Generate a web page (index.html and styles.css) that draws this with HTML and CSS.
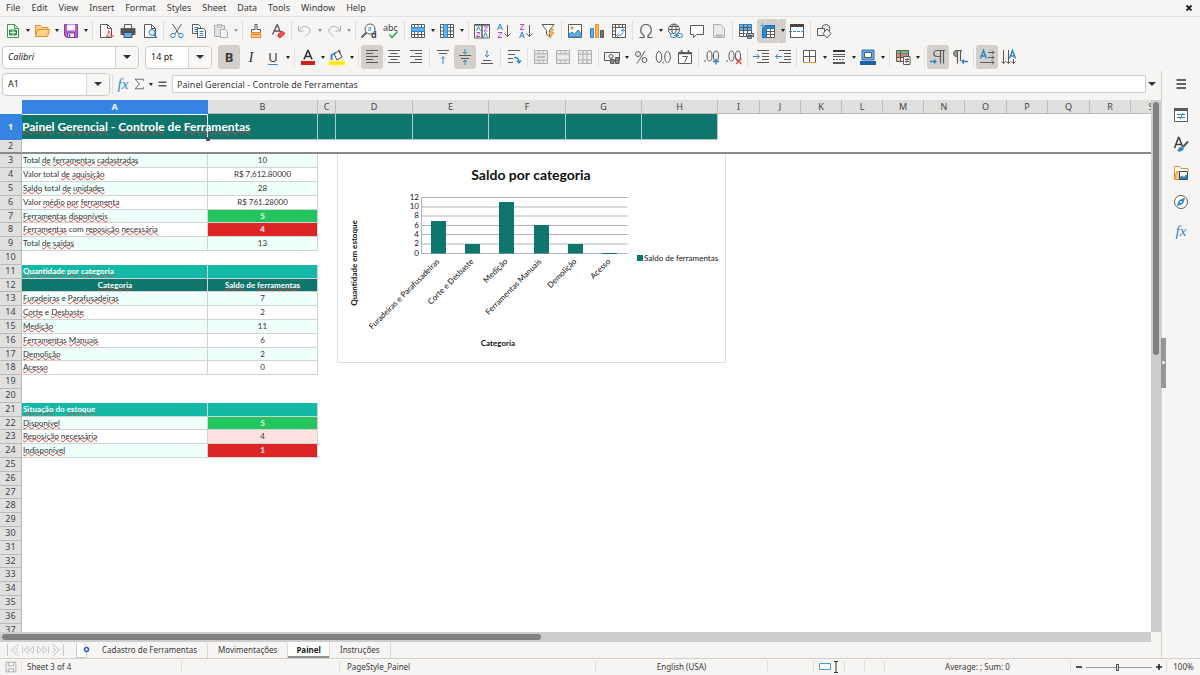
FILE: index.html
```html
<!DOCTYPE html>
<html lang="pt-BR">
<head>
<meta charset="utf-8">
<title>Painel Gerencial</title>
<link rel="stylesheet" href="styles.css">
</head>
<body>
<nav class="menubar">
  <button>File</button><button>Edit</button><button>View</button><button>Insert</button><button>Format</button><button>Styles</button><button>Sheet</button><button>Data</button><button>Tools</button><button>Window</button><button>Help</button>
  <button class="close" aria-label="Close"><svg viewBox="0 0 8 8"><path d="M1.5 1.5l5 5M6.500 1.500l-5 5" stroke="#222" stroke-width="1.800"/></svg></button>
</nav>

<div class="toolbar" role="toolbar" aria-label="Standard">
  <button class="tb" aria-label="New"><svg viewBox="0 0 16 16"><path d="M2.500 1.500h7l4 4v9h-11z" fill="#fff" stroke="#3a9a52"/><path d="M9.500 1.500v4h4" stroke="#3a9a52"/><path d="M4.500 7h7v5h-7z" fill="#43a85c" stroke="#2f8f49"/><path d="M5 9.500h6M8 7v5" stroke="#d8f0dc"/></svg></button><button class="dd" aria-label="New options"></button>
  <button class="tb" aria-label="Open"><svg viewBox="0 0 16 16"><path d="M1.500 13.500v-11h5l1.500 2h6v2" fill="#fbd38c" stroke="#e0912f"/><path d="M1.500 13.500l2-7h12l-2 7z" fill="#fbd38c" stroke="#e0912f"/></svg></button><button class="dd" aria-label="Open options"></button>
  <button class="tb" aria-label="Save"><svg viewBox="0 0 16 16"><path d="M1.500 1.500h13v13h-11l-2-2z" fill="#b565c8" stroke="#8e3fa6"/><path d="M4 1.500h8v6h-8z" fill="#f7f2f8" stroke="none"/><path d="M4.500 10h7v4.500h-7z" fill="#f7f2f8" stroke="#8e3fa6"/><path d="M6.500 11v3" stroke="#8e3fa6" stroke-width="1.500"/></svg></button><button class="dd" aria-label="Save options"></button>
  <i class="sep"></i>
  <button class="tb" aria-label="Export as PDF"><svg viewBox="0 0 16 16"><path d="M2.500 1.500h7l4 4v9h-11z" fill="#fff"/><path d="M9.500 1.500v4h4"/><path d="M7.500 14.500c2-2 3-4 3-7 1 3 2.500 5 5 5.500-3-.5-5 0-8 1.500z" stroke="#e3455a"/></svg></button>
  <button class="tb" aria-label="Print"><svg viewBox="0 0 16 16"><path d="M4.500 5v-3.500h7v3.500" fill="#fff"/><path d="M1 5.500h14v6h-14z" fill="#555"/><path d="M4 9.500h8v5h-8z" fill="#63aee6" stroke="#446"/></svg></button>
  <button class="tb" aria-label="Print preview"><svg viewBox="0 0 16 16"><path d="M2.500 1.500h7l4 4v9h-11z" fill="#fff"/><path d="M9.500 1.500v4h4"/><circle cx="10" cy="9.500" r="3" fill="#d9ecfa" stroke="#2f86cc"/><path d="M12 12l3 3" stroke="#2f86cc" stroke-width="1.300"/></svg></button>
  <i class="sep"></i>
  <button class="tb" aria-label="Cut"><svg viewBox="0 0 16 16"><path d="M3.500 1l6.500 10M12.500 1l-6.500 10"/><circle cx="4" cy="12.500" r="2.200" stroke="#2f86cc"/><circle cx="12" cy="12.500" r="2.200" stroke="#2f86cc"/></svg></button>
  <button class="tb" aria-label="Copy"><svg viewBox="0 0 16 16"><path d="M1.500 1.500h6l2 2v7h-8z" fill="#fff"/><path d="M3.500 4.500h4M3.500 6.500h4M3.500 8.500h4" stroke="#2f86cc"/><path d="M6.500 5.500h6l2 2v7h-8z" fill="#fff"/><path d="M8.500 8.500h4M8.500 10.500h4M8.500 12.500h4" stroke="#2f86cc"/></svg></button>
  <button class="tb off" aria-label="Paste" disabled><svg viewBox="0 0 16 16"><path d="M1.500 2.500h10v11h-10z" fill="#ccc"/><path d="M4.500 1.500h4v2.500h-4z" fill="#ddd"/><path d="M7.500 6.500h5l2 2v6h-7z" fill="#f4f4f4"/></svg></button><button class="dd off" aria-label="Paste options" disabled></button>
  <i class="sep"></i>
  <button class="tb" aria-label="Clone formatting"><svg viewBox="0 0 16 16"><path d="M7 1.500h2v5h3.500v3h-9v-3h3.500z" fill="#f6f6f6"/><path d="M3.500 9.500h9v2h-9z" fill="#f4b860" stroke="#dc8a2b"/><path d="M3 14.500h10l-.5-3h-9z" fill="#f9cf8f" stroke="#dc8a2b"/></svg></button>
  <button class="tb" aria-label="Clear formatting"><svg viewBox="0 0 16 16"><path d="M2.500 11.500l4.500-9.500h.5l3 7.500M4.500 8h5" stroke-width="1.400"/><path d="M7.500 12l4.500-4 3 2.500-4.500 4h-1.500z" fill="#ee4b55" stroke="#c9303c"/></svg></button>
  <i class="sep"></i>
  <button class="tb off" aria-label="Undo" disabled><svg viewBox="0 0 16 16"><path d="M1.500 3v5h5M2 7.500c2.500-6 11-4.500 11 0 0 2-1 3-5 6"/></svg></button><button class="dd off" aria-label="Undo list" disabled></button>
  <button class="tb off" aria-label="Redo" disabled><svg viewBox="0 0 16 16"><path d="M14.500 3v5h-5M14 7.500c-2.500-6-11-4.500-11 0 0 2 1 3 5 6"/></svg></button><button class="dd off" aria-label="Redo list" disabled></button>
  <i class="sep"></i>
  <button class="tb" aria-label="Find and replace"><svg viewBox="0 0 16 16"><circle cx="9" cy="6" r="5" fill="#fff"/><path d="M5.500 9.500l-5 5" stroke-width="1.800"/><text x="6.500" y="8" font-size="7" fill="#2f86cc">a</text><text x="10" y="15" font-size="9" font-weight="700" fill="#444">d</text></svg></button>
  <button class="tb" aria-label="Spelling"><svg viewBox="0 0 16 16"><text x="0" y="8" font-size="9" fill="#444">abc</text><path d="M6.500 11.500l2.500 3 5.500-6" stroke="#3aa55b" stroke-width="1.500"/></svg></button>
  <i class="sep"></i>
  <button class="tb" aria-label="Row"><svg viewBox="0 0 16 16"><path d="M1.500 1.500h13v13h-13z" fill="#fff"/><path d="M4.500 1.500v13M8 1.500v13M11.500 1.500v13M1.500 11.500h13"/><path d="M1.500 4.500h13v4h-13z" fill="#63aee6" stroke="#2f86cc"/></svg></button><button class="dd" aria-label="Row options"></button>
  <button class="tb" aria-label="Column"><svg viewBox="0 0 16 16"><path d="M1.500 1.500h13v13h-13z" fill="#fff"/><path d="M1.500 4.500h13M1.500 8h13M1.500 11.500h13M11.500 1.500v13"/><path d="M4.500 1.500h4v13h-4z" fill="#63aee6" stroke="#2f86cc"/></svg></button><button class="dd" aria-label="Column options"></button>
  <i class="sep"></i>
  <button class="tb" aria-label="Sort"><svg viewBox="0 0 16 16"><path d="M.5 1.500h15v13.500h-15z" fill="#fff"/><path d="M.5 2h15M8 2v13" stroke-width="1.500"/><path d="M2.500 8l2-4.500 2 4.500M9.500 14l2-4.500 2 4.500" stroke="#2f86cc"/><path d="M2.500 9.500h3.500l-3.500 4h3.500M10 4h3.500l-3.500 4h3.500" stroke="#b04fc4"/></svg></button>
  <button class="tb" aria-label="Sort ascending"><svg viewBox="0 0 16 16"><path d="M1.500 7l2.500-6 2.500 6M2.500 5h3" stroke="#2f86cc"/><path d="M2 9.500h4l-4 5h4" stroke="#b04fc4"/><path d="M11.500 2v11.500M8.500 10.500l3 3 3-3"/></svg></button>
  <button class="tb" aria-label="Sort descending"><svg viewBox="0 0 16 16"><path d="M2 1.500h4l-4 5h4" stroke="#b04fc4"/><path d="M1.500 15l2.500-6 2.500 6M2.500 13h3" stroke="#2f86cc"/><path d="M11.500 2v11.500M8.500 10.500l3 3 3-3"/></svg></button>
  <button class="tb" aria-label="AutoFilter"><svg viewBox="0 0 16 16"><path d="M2 1.500h12l-4.500 6v6l-3-2v-4z" fill="#fff"/><path d="M12 6l-3.500 5h2.500l-1 4.500 4-6h-2.500l2-3.500z" fill="#fbb655" stroke="#e0912f" stroke-width=".7"/></svg></button>
  <i class="sep"></i>
  <button class="tb" aria-label="Insert image"><svg viewBox="0 0 16 16"><path d="M1.500 1.500h13v13h-13z" fill="#fff"/><path d="M2 14v-3l3-2 2.500 2 3.500-4 3 3.500v3.500z" fill="#63aee6" stroke="#2f86cc"/><circle cx="5" cy="5" r="1.200" fill="#f4b860" stroke="#e0912f"/></svg></button>
  <button class="tb" aria-label="Insert chart"><svg viewBox="0 0 16 16"><path d="M1.500 5.500h3v9h-3z" fill="#63aee6" stroke="#2f86cc"/><path d="M6.500 1.500h3v13h-3z" fill="#fbb655" stroke="#e0912f"/><path d="M11.500 7.500h3v7h-3z" fill="#777"/></svg></button>
  <button class="tb" aria-label="Insert pivot table"><svg viewBox="0 0 16 16"><path d="M1.500 1.500h13v13h-13z" fill="#fff"/><path d="M1.500 4.500h13M4.500 1.500v13M8 1.500v3M11.500 1.500v3M1.500 8h3M1.500 11.500h3"/><path d="M7 12.500c4 0 5-2 5-5.500M5.500 12.500l2-2M5.500 12.500l2 2M12 6l-2 2M12 6l2 2" stroke="#2f86cc"/></svg></button>
  <i class="sep"></i>
  <button class="tb" aria-label="Special character"><svg viewBox="0 0 16 16"><path d="M1.500 14.500h4.500v-2c-5-3-4-11 2-11s7 8 2 11v2h4.500" stroke-width="1.200"/></svg></button><button class="dd" aria-label="Character list"></button>
  <button class="tb" aria-label="Insert hyperlink"><svg viewBox="0 0 16 16"><circle cx="7" cy="6.500" r="5.500"/><path d="M1.500 6.500h11M2.500 3.500h9M7 1c-3 3-3 8 0 11M7 1c3 3 3 8 0 11"/><rect x="3.500" y="10.500" width="6" height="4" rx="2" fill="#f6f5f4" stroke="#2f86cc"/><rect x="9.500" y="10.500" width="6" height="4" rx="2" fill="#f6f5f4" stroke="#2f86cc"/><path d="M7 12.500h5" stroke="#2f86cc"/></svg></button>
  <button class="tb" aria-label="Insert comment"><svg viewBox="0 0 16 16"><path d="M1.500 2.500h13v9h-7l-3 3v-3h-3z" fill="#fff"/></svg></button>
  <button class="tb off" aria-label="Headers and footers" disabled><svg viewBox="0 0 16 16"><path d="M2.500 1.500h7l4 4v9h-11z" fill="#ddd"/><path d="M4.500 12.500h7" stroke-width="2"/></svg></button>
  <i class="sep"></i>
  <button class="tb" aria-label="Print area"><svg viewBox="0 0 16 16"><path d="M1.500 1.500h12v12h-12z" fill="#fff"/><path d="M1.500 1.500h12v6h-12z" fill="#63aee6" stroke="#2f86cc"/><path d="M5.500 1.500v12M9.500 1.500v12M1.500 4.500h12M1.500 7.500h12M1.500 10.500h6"/><path d="M8.500 10.500h7v3h-7zM9.500 12.500h4v3h-4z" fill="#8cc4ee"/></svg></button>
  <button class="tb on" aria-label="Freeze rows and columns"><svg viewBox="0 0 16 16"><path d="M2.500 2.500h12v12h-12z" fill="#fff"/><path d="M6.500 8.500h8M6.500 11.500h8M10.500 5v9.500"/><path d="M2.500 2.500h12v3h-8v9h-4z" fill="#2f86cc" stroke="#1f6fb2"/><path d="M0 2.500h5M2.500 0v5" stroke="#63aee6"/></svg></button><button class="dd on" aria-label="Freeze options"></button>
  <button class="tb" aria-label="Split window"><svg viewBox="0 0 16 16"><path d="M1.500 1.500h13v13h-13z" fill="#fff"/><path d="M1 2.500h14" stroke="#444" stroke-width="3"/><path d="M0 8.500h16" stroke="#2f86cc" stroke-dasharray="3 1"/></svg></button>
  <i class="sep"></i>
  <button class="tb" aria-label="Draw functions"><svg viewBox="0 0 16 16"><circle cx="10" cy="5.500" r="4"/><path d="M1.500 5.500h7v7h-7z" fill="#f6f5f4"/><path d="M11 6l4 4.500-4 4.500-4-4.500z" fill="#f6f5f4"/></svg></button>
</div>

<div class="toolbar format" role="toolbar" aria-label="Formatting">
  <div class="combo font"><input aria-label="Font name" value="Calibri"><button class="arrow" aria-label="Font list"></button></div>
  <div class="combo size"><input aria-label="Font size" value="14 pt"><button class="arrow" aria-label="Size list"></button></div>
  <button class="tb on letter bold">B</button>
  <button class="tb letter ital">I</button>
  <button class="tb letter under">U</button><button class="dd" aria-label="Underline options"></button>
  <i class="sep"></i>
  <button class="tb" aria-label="Font colour"><svg viewBox="0 0 16 16"><path d="M4 10.500l3.800-9h.4l3.800 9M5.500 7.500h5" stroke="#333" stroke-width="1.600"/><path d="M1 12h14v4h-14z" fill="#d0211c" stroke="none"/></svg></button><button class="dd" aria-label="Font colour list"></button>
  <button class="tb" aria-label="Background colour"><svg viewBox="0 0 16 16"><path d="M5 4.500l5-2.500 3 6-5 3z" fill="#fff" stroke="#444"/><path d="M9 1.500c1.500-1 2.500 0 2 3" stroke="#444"/><path d="M2.500 11v-5l4-2" stroke="#2f86cc" stroke-width="1.800"/><path d="M0 12h16v4h-16z" fill="#fdf100" stroke="none"/></svg></button><button class="dd" aria-label="Background colour list"></button>
  <i class="sep"></i>
  <button class="tb on" aria-label="Align left"><svg viewBox="0 0 16 16"><path d="M2 1.500h12M2 4.500h7M2 7.500h12M2 10.500h7M2 13.500h12"/></svg></button>
  <button class="tb" aria-label="Align centre"><svg viewBox="0 0 16 16"><path d="M2 1.500h12M4.500 4.500h7M2 7.500h12M4.500 10.500h7M2 13.500h12"/></svg></button>
  <button class="tb" aria-label="Align right"><svg viewBox="0 0 16 16"><path d="M2 1.500h12M7 4.500h7M2 7.500h12M7 10.500h7M2 13.500h12"/></svg></button>
  <i class="sep"></i>
  <button class="tb" aria-label="Align top"><svg viewBox="0 0 16 16"><path d="M2 1.500h12M4 4.500h8"/><path d="M8 15v-7M6 9.500l2-2 2 2" stroke="#2f86cc"/></svg></button>
  <button class="tb on" aria-label="Centre vertically"><svg viewBox="0 0 16 16"><path d="M2 6.500h12M4 9.500h8"/><path d="M8 0v4.500M6 3l2 2 2-2M8 16v-4.500M6 13l2-2 2 2" stroke="#2f86cc"/></svg></button>
  <button class="tb" aria-label="Align bottom"><svg viewBox="0 0 16 16"><path d="M4 11.500h8M2 14.500h12"/><path d="M8 1v6.500M6 6l2 2 2-2" stroke="#2f86cc"/></svg></button>
  <i class="sep"></i>
  <button class="tb" aria-label="Wrap text"><svg viewBox="0 0 16 16"><path d="M2 1.500h12M2 5.500h7M2 9.500h5M2 13.500h5"/><path d="M8 8.500c4 0 5 1 5 5M11 11.500l2 2.500 2-2.500" stroke="#2f86cc" stroke-width="1.300"/></svg></button>
  <i class="sep"></i>
  <button class="tb off" aria-label="Merge and centre" disabled><svg viewBox="0 0 16 16"><path d="M1.500 1.500h13v13h-13zM1.500 5h13M1.500 11h13M6 1.500v3.500M10 1.500v3.500M6 11v3.500M10 11v3.500" fill="#ddd"/><path d="M4 8h8" stroke-width="1.500"/></svg></button>
  <button class="tb off" aria-label="Merge cells" disabled><svg viewBox="0 0 16 16"><path d="M1.500 1.500h13v13h-13zM1.500 5h13M1.500 11h13M6 1.500v3.500M10 1.500v3.500M6 11v3.500M10 11v3.500" fill="#ddd"/></svg></button>
  <button class="tb off" aria-label="Unmerge cells" disabled><svg viewBox="0 0 16 16"><path d="M1.500 1.500h13v13h-13zM1.500 5h13M1.500 11h13M6 1.500v13M10 1.500v13" fill="#ddd"/></svg></button>
  <i class="sep"></i>
  <button class="tb" aria-label="Currency"><svg viewBox="0 0 16 16"><path d="M.5 3.500h15v8h-15z"/><circle cx="7" cy="7.500" r="2"/><path d="M6.500 10.500h3.500v4h-3.500zM11.500 8.500h3.500v6h-3.500z" fill="#888"/></svg></button><button class="dd" aria-label="Currency list"></button>
  <button class="tb" aria-label="Percent"><svg viewBox="0 0 16 16"><circle cx="5" cy="5" r="2.500"/><circle cx="11.500" cy="11" r="2.500"/><path d="M12 2l-8 12.500"/></svg></button>
  <button class="tb" aria-label="Number"><svg viewBox="0 0 16 16"><ellipse cx="4" cy="8" rx="2.800" ry="5.500"/><ellipse cx="12.500" cy="8" rx="2.800" ry="5.500"/><path d="M8 12.500v2"/></svg></button>
  <button class="tb" aria-label="Date"><svg viewBox="0 0 16 16"><path d="M1.500 3.500h13v11h-13z" fill="#fff"/><path d="M1 4.500h14M4.500 1v3M11.500 1v3" stroke-width="1.600"/><path d="M5.500 7.500h5l-3 6" /></svg></button>
  <i class="sep"></i>
  <button class="tb" aria-label="Add decimal place"><svg viewBox="0 0 16 16"><ellipse cx="5.500" cy="7" rx="2.500" ry="5"/><ellipse cx="12" cy="7" rx="2.500" ry="5"/><path d="M1 11v2"/><path d="M12 9.500v6M9 12.500h6" stroke="#2f86cc" stroke-width="1.300"/></svg></button>
  <button class="tb" aria-label="Delete decimal place"><svg viewBox="0 0 16 16"><ellipse cx="5.500" cy="7" rx="2.500" ry="5"/><ellipse cx="12" cy="7" rx="2.500" ry="5"/><path d="M1 11v2"/><path d="M10 9.500l5.500 5.500M15.500 9.500l-5.500 5.500" stroke="#e03c4a" stroke-width="1.300"/></svg></button>
  <i class="sep"></i>
  <button class="tb" aria-label="Increase indent"><svg viewBox="0 0 16 16"><path d="M4 1.500h12M9 4.500h7M9 7.500h7M9 10.500h7M4 13.500h12"/><path d="M0 7.500h6M4 5l2.500 2.500-2.500 2.500" stroke="#2f86cc"/></svg></button>
  <button class="tb" aria-label="Decrease indent"><svg viewBox="0 0 16 16"><path d="M4 1.500h12M9 4.500h7M9 7.500h7M9 10.500h7M4 13.500h12"/><path d="M7 7.500h-6M3 5l-2.500 2.500 2.500 2.500" stroke="#2f86cc"/></svg></button>
  <i class="sep"></i>
  <button class="tb" aria-label="Borders"><svg viewBox="0 0 16 16"><path d="M1.500 1.500h12v12h-12z" fill="#fff"/><path d="M7.500 1.500v12M1.500 7.500h12"/><path d="M1 13.500h13" stroke="#e0912f"/></svg></button><button class="dd" aria-label="Borders list"></button>
  <button class="tb" aria-label="Border style"><svg viewBox="0 0 16 16"><path d="M2 2h12" stroke="#333" stroke-width="2"/><path d="M2 5.500h12M2 7.500h12"/><path d="M2 10.500h12" stroke-dasharray="2 1"/><path d="M2 14h12" stroke-width="2"/></svg></button><button class="dd" aria-label="Border style list"></button>
  <button class="tb" aria-label="Border colour"><svg viewBox="0 0 16 16"><path d="M2 1h12v10h-12z" fill="#63aee6" stroke="#2f6fb0"/><path d="M4.500 3.500h7v5h-7z" fill="#fff" stroke="#555"/><path d="M0 12h16v4h-16z" fill="#1b5fa8" stroke="none"/></svg></button><button class="dd" aria-label="Border colour list"></button>
  <i class="sep"></i>
  <button class="tb" aria-label="Conditional formatting"><svg viewBox="0 0 16 16"><path d="M1.500 1.500h12v11h-12z" fill="#fff"/><path d="M2 2h11v3h-11z" fill="#72c285" stroke="none"/><path d="M2 5.500h11v3h-11z" fill="#ee7c74" stroke="none"/><path d="M2 9h5v3h-5z" fill="#f9cf8f" stroke="none"/><path d="M5.500 1.500v11M1.500 5h12M1.500 8.500h12"/><path d="M8.500 7.500h6.500v8h-6.500z" fill="#fff"/><path d="M10 10.500h4M10 12.500h4M13 9l-2 5"/></svg></button><button class="dd" aria-label="Conditional formatting list"></button>
  <i class="sep"></i>
  <button class="tb on" aria-label="Left to right"><svg viewBox="0 0 16 16"><path d="M10.500 14.500v-13h-3c-5 0-5 6 0 6h3M13.500 14.500v-13M7 1.500h8" stroke-width="1.200"/><path d="M0 12.500h6M4 10.500l2 2-2 2" stroke="#2f86cc" stroke-width="1.300"/></svg></button>
  <button class="tb" aria-label="Right to left"><svg viewBox="0 0 16 16"><path d="M5.500 7.500h-1c-4 0-4-6 0-6h1z" fill="#999"/><path d="M5.500 14.500v-13M8.500 12v-10.500M4 1.500h6" stroke-width="1.200"/><path d="M16 12.500h-6M12 10.500l-2 2 2 2" stroke="#2f86cc" stroke-width="1.300"/></svg></button>
  <i class="sep"></i>
  <button class="tb on" aria-label="Text horizontal"><svg viewBox="0 0 16 16"><path d="M1.500 9.500l3-8 3 8M2.500 7h4" stroke="#2f86cc" stroke-width="1.500"/><path d="M9 3.500h6M13 1.500l2 2-2 2M9 8.500h6M13 6.500l2 2-2 2M1 13.500h14M13 11.500l2 2-2 2"/></svg></button>
  <button class="tb" aria-label="Text vertical"><svg viewBox="0 0 16 16"><path d="M8.500 9.500l3-8 3 8M9.500 7h4" stroke="#2f86cc" stroke-width="1.500"/><path d="M2.500 1v13.500M.5 12.500l2 2 2-2M7.500 1v13.500M5.500 12.500l2 2 2-2M12.500 10v4.500M10.500 12.500l2 2 2-2"/></svg></button>
</div>

<main class="work">
  <section class="doc">
    <div class="formula">
      <div class="combo name"><input aria-label="Name box" value="A1"><button class="arrow" aria-label="Name list"></button></div>
      <i class="sep"></i>
      <button class="fb fx" aria-label="Function wizard"><i>fx</i></button>
      <button class="fb" aria-label="Select function"><svg viewBox="0 0 16 16"><path d="M13 4.500v-2h-9.500l5 5.500-5 5.500h9.500v-2"/></svg></button><button class="dd" aria-label="Function list"></button>
      <button class="fb" aria-label="Formula"><svg viewBox="0 0 16 16"><path d="M4 6h9M4 10h9" stroke-width="1.800"/></svg></button>
      <input class="line" aria-label="Input line" value="Painel Gerencial - Controle de Ferramentas">
      <button class="arrow open" aria-label="Expand formula bar"></button>
    </div>
    <div class="sheetrow">
      <div class="sheet">
        <table class="grid">
          <colgroup><col class="c22"><col class="c186"><col class="c110"><col class="c18"><col class="c77"><col class="c76"><col class="c77"><col class="c76"><col class="c76"><col class="c42"><col class="c41"><col class="c41"><col class="c41"><col class="c41"><col class="c41"><col class="c42"><col class="c41"><col class="c42"><col class="c41"><col class="c41"></colgroup>
          <thead><tr><td class="corner"></td><th class="sel">A</th><th>B</th><th>C</th><th>D</th><th>E</th><th>F</th><th>G</th><th>H</th><th>I</th><th>J</th><th>K</th><th>L</th><th>M</th><th>N</th><th>O</th><th>P</th><th>Q</th><th>R</th><th>S</th></tr></thead>
          <tbody class="frozen">
            <tr class="banner"><th class="sel">1</th><td class="cursor"><u>Painel</u> <u>Gerencial</u> - <u>Controle</u> de <u>Ferramentas</u></td><td></td><td></td><td></td><td></td><td></td><td></td><td></td></tr>
            <tr class="split"><th>2</th><td colspan="19"></td></tr>
          </tbody>
          <tbody class="rows">
            <tr class="d tint"><th>3</th><td>Total <u>de</u> <u>ferramentas</u> <u>cadastradas</u></td><td>10</td></tr>
            <tr class="d"><th>4</th><td>Valor total <u>de</u> <u>aquisição</u></td><td>R$ 7,612.80000</td></tr>
            <tr class="d tint"><th>5</th><td><u>Saldo</u> total <u>de</u> <u>unidades</u></td><td>28</td></tr>
            <tr class="d"><th>6</th><td>Valor <u>médio</u> <u>por</u> <u>ferramenta</u></td><td>R$ 761.28000</td></tr>
            <tr class="d tint"><th>7</th><td><u>Ferramentas</u> <u>disponíveis</u></td><td class="green">5</td></tr>
            <tr class="d"><th>8</th><td><u>Ferramentas</u> com <u>reposição</u> <u>necessária</u></td><td class="red">4</td></tr>
            <tr class="d tint"><th>9</th><td>Total <u>de</u> <u>saídas</u></td><td>13</td></tr>
            <tr><th>10</th></tr>
            <tr class="d teal"><th>11</th><td><u>Quantidade</u> <u>por</u> <u>categoria</u></td><td></td></tr>
            <tr class="d head"><th>12</th><td><u>Categoria</u></td><td><u>Saldo</u> de <u>ferramentas</u></td></tr>
            <tr class="d tint"><th>13</th><td><u>Furadeiras</u> e <u>Parafusadeiras</u></td><td>7</td></tr>
            <tr class="d"><th>14</th><td><u>Corte</u> e <u>Desbaste</u></td><td>2</td></tr>
            <tr class="d tint"><th>15</th><td><u>Medição</u></td><td>11</td></tr>
            <tr class="d"><th>16</th><td><u>Ferramentas</u> <u>Manuais</u></td><td>6</td></tr>
            <tr class="d tint"><th>17</th><td><u>Demolição</u></td><td>2</td></tr>
            <tr class="d"><th>18</th><td><u>Acesso</u></td><td>0</td></tr>
            <tr><th>19</th></tr>
            <tr><th>20</th></tr>
            <tr class="d teal"><th>21</th><td><u>Situação</u> do <u>estoque</u></td><td></td></tr>
            <tr class="d tint"><th>22</th><td><u>Disponível</u></td><td class="green">5</td></tr>
            <tr class="d"><th>23</th><td><u>Reposição</u> <u>necessária</u></td><td class="pink">4</td></tr>
            <tr class="d tint"><th>24</th><td><u>Indisponível</u></td><td class="red">1</td></tr>
            <tr><th>25</th></tr><tr><th>26</th></tr><tr><th>27</th></tr><tr><th>28</th></tr><tr><th>29</th></tr><tr><th>30</th></tr><tr><th>31</th></tr><tr><th>32</th></tr><tr><th>33</th></tr><tr><th>34</th></tr><tr><th>35</th></tr><tr><th>36</th></tr><tr><th>37</th></tr>
          </tbody>
        </table>
        <svg class="chart" viewBox="0 0 389 209" role="img" aria-label="Saldo por categoria">
          <path class="frame" d="M.5 0v208.500h388v-208.500"/>
          <text class="title" x="194" y="26" text-anchor="middle">Saldo por categoria</text>
          <path class="lines" d="M84.500 43.500h206M84.500 53h206M84.500 62h206M84.500 71.500h206M84.500 80.500h206M84.500 90h206M84.500 99.500h206M84.500 43.500v56"/>
          <path class="bars" d="M94 67h15v32.500h-15zM128 90h15v9.500h-15zM162 48h15v51.500h-15zM197 71h15v28.500h-15zM231 90h15v9.500h-15zM265 99h15v1h-15z"/>
          <g class="ticks" text-anchor="end"><text x="82" y="46">12</text><text x="82" y="55">10</text><text x="82" y="64">8</text><text x="82" y="74">6</text><text x="82" y="83">4</text><text x="82" y="92">2</text><text x="82" y="102">0</text></g>
          <g class="cats" text-anchor="end"><text transform="translate(103 108) rotate(-45)">Furadeiras e Parafusadeiras</text><text transform="translate(137 108) rotate(-45)">Corte e Desbaste</text><text transform="translate(171 108) rotate(-45)">Medição</text><text transform="translate(205 108) rotate(-45)">Ferramentas Manuais</text><text transform="translate(240 108) rotate(-45)">Demolição</text><text transform="translate(274 108) rotate(-45)">Acesso</text></g>
          <text class="axis" transform="translate(20 109) rotate(-90)" text-anchor="middle">Quantidade em estoque</text>
          <text class="axis" x="161" y="192" text-anchor="middle">Categoria</text>
          <path class="bars" d="M300 101h6v6h-6z"/>
          <text class="legend" x="307" y="107">Saldo de ferramentas</text>
        </svg>
      </div>
      <div class="vscroll"><i></i></div>
    </div>
    <div class="hscroll"><i></i></div>
    <div class="tabs">
      <div class="navs"><button aria-label="First sheet"><svg viewBox="0 0 14 14"><path d="M1.500 1v12M12.500 1l-7 6 7 6M12.500 4.500l-3 2.500 3 2.500"/></svg></button><button aria-label="Previous sheet"><svg viewBox="0 0 14 14"><path d="M1.500 3.500v7M7 3.500l-4 3.500 4 3.500zM12.500 3.500l-4 3.500 4 3.500z"/></svg></button><button aria-label="Next sheet"><svg viewBox="0 0 14 14"><path d="M12.500 3.500v7M7 3.500l4 3.500-4 3.500zM1.500 3.500l4 3.500-4 3.500z"/></svg></button><button aria-label="Last sheet"><svg viewBox="0 0 14 14"><path d="M12.500 1v12M1.500 1l7 6-7 6M1.500 4.500l3 2.500-3 2.500"/></svg></button></div>
      <button class="add" aria-label="Add sheet"><svg viewBox="0 0 16 16"><path d="M1.500 1v14.500h10v-11l-3-3.500" fill="#fff" stroke="#ccc"/><circle cx="11.500" cy="7.500" r="2" fill="#fff" stroke="#2a5fb0" stroke-width="1.500"/></svg></button>
      <button class="tab">Cadastro de Ferramentas</button><button class="tab">Movimentações</button><button class="tab active">Painel</button><button class="tab">Instruções</button>
    </div>
  </section>
  <aside class="side">
    <i class="handle"></i>
    <button class="menu" aria-label="Sidebar settings"><svg viewBox="0 0 16 16"><path d="M3.500 4h9.500M3.500 8h9.500M3.500 12h9.500" stroke="#333" stroke-width="1.500"/></svg></button>
    <button aria-label="Properties"><svg viewBox="0 0 16 16"><path d="M1.500 1.500h13v13h-13z" fill="#fff"/><path d="M1 2.500h14" stroke-width="3"/><path d="M4 7.500h8M4 10.500h8M10 6l-3 6" stroke="#2f86cc"/></svg></button>
    <button aria-label="Styles"><svg viewBox="0 0 16 16"><path d="M1.500 12l4-10.500h.5l3.500 9M3 8.500h5.500" stroke="#444" stroke-width="1.600"/><path d="M15 5.500l-5 5.500" stroke-width="2"/><path d="M5 15c0-3 3-4.500 5-3.500 1 2-1 4-5 3.500z" fill="#2f86cc" stroke="#2f86cc"/></svg></button>
    <button aria-label="Gallery"><svg viewBox="0 0 16 16"><path d="M1.500 14.500v-13h5l1.500 2h7v3" fill="#fff" stroke="#e0912f"/><path d="M1.500 14.500l2-8h3v8z" fill="#fbc67a" stroke="#e0912f"/><path d="M6.500 6.500h8v8h-8z" fill="#e9f4fc" stroke="#445"/><path d="M7 14v-2l2-1.500 2 1.500 2-2.500 1 1v3.500z" fill="#2f86cc" stroke="none"/></svg></button>
    <button aria-label="Navigator"><svg viewBox="0 0 16 16"><circle cx="8" cy="8" r="6.500" fill="#fff"/><path d="M11.500 4.500l-2 5-5 2 2-5z" fill="#2f86cc" stroke="#2f86cc"/><circle cx="8" cy="8" r="1" fill="#fff" stroke="none"/></svg></button>
    <button class="fx" aria-label="Functions"><i>fx</i></button>
  </aside>
</main>

<footer class="status">
  <span class="s-save"><svg viewBox="0 0 16 16"><path d="M1.500 1.500h13v13h-13zM4.500 1.500v5h7v-5M4.500 14.500v-4h7v4"/></svg></span>
  <span class="s-sheet">Sheet 3 of 4</span>
  <span class="s-blank"></span>
  <span class="s-style">PageStyle_Painel</span>
  <span class="s-lang">English (USA)</span>
  <span class="s-gap"></span>
  <span class="s-mode"><svg viewBox="0 0 20 12"><path d="M.5 2.500h11v6h-11z" fill="#fff" stroke="#4a9ad4"/><path d="M15 .5h4M17 .5v11M15 11.500h4" stroke="#333"/></svg></span>
  <span class="s-a"></span>
  <span class="s-a"></span>
  <span class="s-sum">Average: ; Sum: 0</span>
  <span class="s-zoom"><button aria-label="Zoom out"><svg viewBox="0 0 8 8"><path d="M1 4h6" stroke="#222" stroke-width="1.600"/></svg></button><input type="range" aria-label="Zoom" min="0" max="100" value="49"><button aria-label="Zoom in"><svg viewBox="0 0 8 8"><path d="M1 4h6M4 1v6" stroke="#222" stroke-width="1.600"/></svg></button></span>
  <span class="s-pct">100%</span>
</footer>
</body>
</html>
```
FILE: styles.css
```css
* { box-sizing: border-box; }
body {
  margin: 0;
  height: 100vh;
  display: flex;
  flex-direction: column;
  overflow: hidden;
  background: #f6f5f4;
  color: #3a3a3a;
  font: 9px/12px "Noto Sans", sans-serif;
}
button, input { font: inherit; color: inherit; border: 0; padding: 0; margin: 0; background: none; min-width: 0; }
button { display: inline-flex; align-items: center; justify-content: center; flex: none; }
svg { fill: none; stroke: #5a5a5a; display: block; overflow: visible; }
text { stroke: none; }

.menubar { display: flex; align-items: center; height: 17px; padding-left: 6px; gap: 11px; border-bottom: 1px solid #e4e2e0; flex: none; }
.menubar .close { margin-left: auto; margin-right: 7px; }
.close svg { width: 8px; height: 8px; }

.toolbar { display: flex; align-items: center; height: 27px; padding-left: 2px; flex: none; }
.format { height: 26px; margin-bottom: 1px; }
.tb { width: 22px; height: 24px; }
.tb svg { width: 16px; height: 16px; }
.tb.on, .dd.on { background: #d3d0cc; }
.tb.on { border-radius: 3px; }
.dd { width: 7px; height: 24px; }
.dd::before { content: ""; border: 2px solid transparent; border-top: 3px solid #222; border-bottom: 0; }
.off { opacity: .45; }
.sep { width: 1px; height: 20px; margin: 0 2px; background: #e2e0dd; flex: none; }
.dd + .sep { margin-left: 3px; }
.letter { font-size: 13px; line-height: 16px; }
.bold { font-weight: 700; }
.ital { font-family: "Liberation Serif", serif; font-style: italic; font-size: 15px; }
.under { text-decoration: underline #2f86cc; text-underline-offset: 2px; }

.combo { display: flex; height: 23px; border: 1px solid #cdc9c5; border-radius: 4px; background: #fff; overflow: hidden; flex: none; }
.combo input { flex: 1; padding-left: 5px; font-size: 9px; color: #222; }
.arrow { width: 23px; background: #f8f7f6; border-left: 1px solid #d9d6d3; }
.arrow::before { content: ""; border: 4px solid transparent; border-top: 4px solid #333; border-bottom: 0; }
.font { width: 137px; margin: 0 6px 0 0; }
.font input { font-style: italic; }
.size { width: 67px; margin-right: 6px; }

.work { flex: 1; display: flex; min-height: 0; }
.doc { flex: 1; min-width: 0; display: flex; flex-direction: column; }
.formula { display: flex; align-items: center; height: 29px; padding: 0 4px 3px 2px; flex: none; }
.name { width: 108px; }
.fb { width: 16px; height: 20px; }
.fb svg { width: 14px; height: 14px; }
.fx i { font: italic 15px/16px "Liberation Serif", serif; color: #2f86cc; }
.line { flex: 1; height: 18px; margin-left: 2px; padding-left: 4px; background: #fff; border: 1px solid #d3d0cc; }
.open { width: 11px; background: none; border: 0; }

.sheetrow { flex: 1; display: flex; min-height: 0; }
.sheet { flex: 1; min-width: 0; position: relative; overflow: hidden; background: #fff; }
.grid { width: 1172px; table-layout: fixed; border-collapse: separate; border-spacing: 0; }
.c18 { width: 18px; } .c22 { width: 22px; } .c41 { width: 41px; } .c42 { width: 42px; }
.c76 { width: 76px; } .c77 { width: 77px; } .c110 { width: 110px; } .c186 { width: 186px; }
th, td { padding: 0; font-weight: 400; white-space: nowrap; }
thead tr { height: 14px; }
th { background: #dfdfde; border-right: 1px solid #bcbab8; border-bottom: 1px solid #bcbab8; text-align: center; color: #444; }
.corner { background: #f6f5f4; }
th.sel { background: #3584e4; border-color: #3584e4; color: #fff; font-weight: 700; }
.banner { height: 26px; }
.banner td { background: #0f766e; border-right: 1px solid #a5cfcb; border-bottom: 1px solid #b8c4c3; }
.banner td.cursor { position: relative; border: 1px solid #fff; border-left: 0; color: #fff; font: 700 12px/16px Lato, sans-serif; }
.cursor::after { content: ""; position: absolute; right: -3px; bottom: -2px; width: 4px; height: 4px; background: #555; }
.split { height: 14px; }
.split td, .split th { border-bottom: 2px solid #8a8a8a; }
.rows tr { height: 14px; }
.rows tr:nth-child(5n) { height: 13px; }
.rows th, .rows td { line-height: 12px; vertical-align: top; }
.d td { font-family: Lato, sans-serif; font-size: 8px; color: #333; border-right: 1px solid #d0d3d3; border-bottom: 1px solid #d0d3d3; }
.d td:nth-child(2) { padding-left: 1px; }
.d td:nth-child(3) { text-align: center; }
.tint td { background: #effffc; }
.d .green { background: #22c55e; color: #fff; font-weight: 700; }
.d .red { background: #dc2626; color: #fff; font-weight: 700; }
.d .pink { background: #fee2e2; }
.teal td { background: #14b8a6; color: #fff; font-weight: 700; }
.head td { background: #0f766e; color: #fff; font-weight: 700; text-align: center; }
u { text-decoration: underline wavy #e0403c 1px; text-underline-offset: -1px; text-decoration-skip-ink: none; }

.chart { position: absolute; left: 337px; top: 54px; width: 389px; height: 209px; background: #fff; stroke: none; fill: #111; font-family: Lato, sans-serif; font-size: 8px; }
.frame { fill: none; stroke: #ddd; }
.lines { fill: none; stroke: #b3b3b3; }
.bars { fill: #0f766e; }
.title { font-size: 14px; font-weight: 700; }
.ticks { font-size: 8px; }
.axis { font-weight: 700; }

.vscroll { width: 10px; background: #cdcdcd; padding: 2px; }
.vscroll i { display: block; width: 6px; height: 48%; border-radius: 3px; background: #7f8080; }
.hscroll { height: 10px; padding: 2px; background: #cdcdcd; margin-right: 10px; flex: none; }
.hscroll i { display: block; width: 47%; height: 6px; border-radius: 3px; background: #7f8080; }
.tabs { display: flex; height: 16px; flex: none; padding-left: 5px; font-size: 8px; }
.navs { display: flex; width: 69px; }
.navs button { width: 15px; }
.navs svg { width: 14px; height: 14px; stroke: #c9c7c5; }
.add { width: 18px; }
.add svg { width: 16px; height: 16px; }
.tab { padding: 0 10px; border-right: 1px solid #dcdad8; }
.tab.active { padding: 0 8px; background: #fff; font-weight: 700; color: #222; box-shadow: inset 0 -2px #8f8f8f; }

.side { position: relative; width: 39px; display: flex; flex-direction: column; align-items: center; gap: 13px; padding-top: 5px; border-left: 1px solid #d3d0cc; flex: none; }
.side button { width: 16px; height: 16px; }
.side .menu { margin-bottom: 2px; }
.side svg { width: 16px; height: 16px; }
.handle { position: absolute; left: -1px; top: 267px; width: 5px; height: 50px; background: #969898; }
.handle::after { content: ""; position: absolute; left: 1px; top: 23px; width: 3px; height: 3px; border-radius: 2px; background: #fff; }

.status { display: flex; align-items: center; height: 17px; border-top: 1px solid #d3d0cc; font-size: 8px; flex: none; }
.status span { display: flex; align-items: center; justify-content: center; height: 12px; border-right: 1px solid #e2e0dd; flex: none; }
.status .s-save { width: 22px; }
.s-save svg { width: 12px; height: 12px; stroke: #999; }
.status .s-sheet { width: 160px; justify-content: flex-start; padding-left: 5px; }
.status .s-blank { flex: 1; }
.status .s-style { width: 256px; justify-content: flex-start; padding-left: 7px; }
.status .s-lang { width: 172px; }
.status .s-gap { width: 46px; }
.status .s-mode { width: 31px; }
.s-mode svg { width: 20px; height: 12px; }
.status .s-a { width: 20px; }
.status .s-sum { width: 186px; }
.status .s-zoom { width: 96px; gap: 3px; }
.s-zoom svg { width: 8px; height: 8px; }
.status .s-pct { width: 33px; border: 0; }
input[type=range] { appearance: none; flex: none; width: 66px; height: 10px; background: linear-gradient(#999, #999) center / 100% 1px no-repeat; }
input[type=range]::-webkit-slider-thumb { appearance: none; width: 3px; height: 7px; border: 1px solid #555; background: #ddd; }
```
